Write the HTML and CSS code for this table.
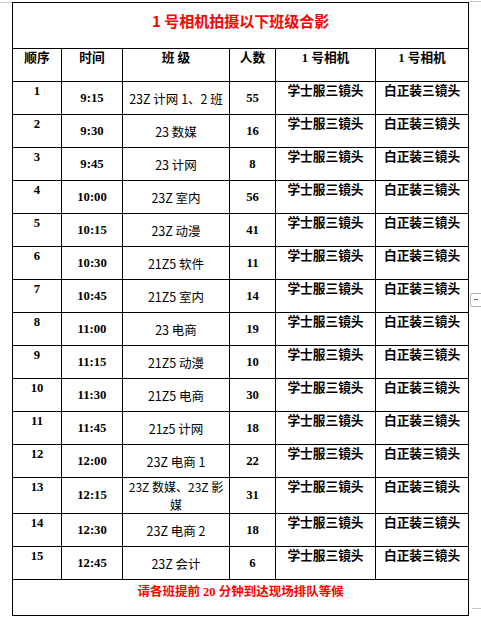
FILE: index.html
```html
<!DOCTYPE html>
<html lang="zh-CN">
<head>
<meta charset="utf-8">
<title>1 号相机拍摄以下班级合影</title>
<link rel="stylesheet" href="styles.css">
</head>
<body>
<div class="page">
  <span class="mark mark-tl"></span>
  <span class="mark mark-tr"></span>
  <span class="mark mark-br"></span>
  <span class="side-tab"><span class="side-dash"></span></span>
  <table class="sched">
    <colgroup>
      <col class="c-no"><col class="c-time"><col class="c-class"><col class="c-count"><col class="c-cam"><col class="c-cam2">
    </colgroup>
    <tr class="r-title"><td colspan="6" class="title">1 号相机拍摄以下班级合影</td></tr>
    <tr class="r-head">
      <th>顺序</th><th>时间</th><th>班 级</th><th>人数</th><th>1 号相机</th><th>1 号相机</th>
    </tr>
    <tr><td class="no">1</td><td class="time">9:15</td><td class="cls">23Z 计网 1、2 班</td><td class="cnt">55</td><td class="cam">学士服三镜头</td><td class="cam">白正装三镜头</td></tr>
    <tr><td class="no">2</td><td class="time">9:30</td><td class="cls">23 数媒</td><td class="cnt">16</td><td class="cam">学士服三镜头</td><td class="cam">白正装三镜头</td></tr>
    <tr><td class="no">3</td><td class="time">9:45</td><td class="cls">23 计网</td><td class="cnt">8</td><td class="cam">学士服三镜头</td><td class="cam">白正装三镜头</td></tr>
    <tr><td class="no">4</td><td class="time">10:00</td><td class="cls">23Z 室内</td><td class="cnt">56</td><td class="cam">学士服三镜头</td><td class="cam">白正装三镜头</td></tr>
    <tr><td class="no">5</td><td class="time">10:15</td><td class="cls">23Z 动漫</td><td class="cnt">41</td><td class="cam">学士服三镜头</td><td class="cam">白正装三镜头</td></tr>
    <tr><td class="no">6</td><td class="time">10:30</td><td class="cls">21Z5 软件</td><td class="cnt">11</td><td class="cam">学士服三镜头</td><td class="cam">白正装三镜头</td></tr>
    <tr><td class="no">7</td><td class="time">10:45</td><td class="cls">21Z5 室内</td><td class="cnt">14</td><td class="cam">学士服三镜头</td><td class="cam">白正装三镜头</td></tr>
    <tr><td class="no">8</td><td class="time">11:00</td><td class="cls">23 电商</td><td class="cnt">19</td><td class="cam">学士服三镜头</td><td class="cam">白正装三镜头</td></tr>
    <tr><td class="no">9</td><td class="time">11:15</td><td class="cls">21Z5 动漫</td><td class="cnt">10</td><td class="cam">学士服三镜头</td><td class="cam">白正装三镜头</td></tr>
    <tr><td class="no">10</td><td class="time">11:30</td><td class="cls">21Z5 电商</td><td class="cnt">30</td><td class="cam">学士服三镜头</td><td class="cam">白正装三镜头</td></tr>
    <tr><td class="no">11</td><td class="time">11:45</td><td class="cls">21z5 计网</td><td class="cnt">18</td><td class="cam">学士服三镜头</td><td class="cam">白正装三镜头</td></tr>
    <tr><td class="no">12</td><td class="time">12:00</td><td class="cls">23Z 电商 1</td><td class="cnt">22</td><td class="cam">学士服三镜头</td><td class="cam">白正装三镜头</td></tr>
    <tr class="r-tall"><td class="no">13</td><td class="time">12:15</td><td class="cls cls-wrap">23Z 数媒、23Z 影<br>媒</td><td class="cnt">31</td><td class="cam">学士服三镜头</td><td class="cam">白正装三镜头</td></tr>
    <tr><td class="no">14</td><td class="time">12:30</td><td class="cls">23Z 电商 2</td><td class="cnt">18</td><td class="cam">学士服三镜头</td><td class="cam">白正装三镜头</td></tr>
    <tr><td class="no">15</td><td class="time">12:45</td><td class="cls">23Z 会计</td><td class="cnt">6</td><td class="cam">学士服三镜头</td><td class="cam">白正装三镜头</td></tr>
    <tr class="r-foot"><td colspan="6" class="foot">请各班提前 <span class="num">20</span> 分钟到达现场排队等候</td></tr>
  </table>
</div>
</body>
</html>
```

FILE: styles.css
```css
html, body {
  margin: 0;
  padding: 0;
  background: #ffffff;
}

.page {
  position: relative;
  width: 481px;
  height: 621px;
  padding: 2px 0 0 12px;
  box-sizing: border-box;
  overflow: hidden;
}

.sched {
  border-collapse: collapse;
  table-layout: fixed;
  width: 456px;
  font-family: "Liberation Serif", "Noto Sans CJK SC", serif;
  color: #000;
}

.c-no { width: 49px; }
.c-time { width: 61px; }
.c-class { width: 107px; }
.c-count { width: 46px; }
.c-cam { width: 100px; }
.c-cam2 { width: 93px; }

.sched td, .sched th {
  border: 1px solid #000;
  padding: 0;
  text-align: center;
  font-size: 12.7px;
  line-height: 15px;
}

.sched tr { height: 33px; }
.sched tr.r-title { height: 46px; }
.sched tr.r-tall { height: 35px; }
.sched tr.r-foot { height: 36px; }

.title {
  vertical-align: top;
  padding-top: 9px !important;
  font-family: "Noto Sans CJK SC", sans-serif;
  font-weight: 700;
  font-size: 15px !important;
  line-height: 18px !important;
  color: #ff0000;
}

.r-head th {
  vertical-align: top;
  padding-top: 2px;
  font-weight: 700;
}

.no {
  vertical-align: top;
  padding-top: 2px !important;
  font-weight: 700;
}

.time {
  vertical-align: middle;
  font-weight: 700;
}

.cls {
  vertical-align: middle;
  font-family: "Noto Sans CJK SC", sans-serif;
  font-weight: 400;
  font-size: 12.5px !important;
}

.cls-wrap {
  font-size: 12px !important;
  line-height: 17.5px !important;
}

.cnt {
  vertical-align: middle;
  font-weight: 700;
}

.cam {
  vertical-align: top;
  padding-top: 2px !important;
  font-weight: 700;
}

.foot {
  vertical-align: top;
  padding-top: 5px !important;
  font-weight: 700;
  font-size: 12.5px !important;
  color: #ff0000;
}

.foot .num {
  font-family: "Liberation Serif", serif;
}

.mark {
  position: absolute;
  background: #c8c8c8;
}
.mark-tl { left: 0; top: 2px; width: 11px; height: 1px; }
.mark-tr { left: 469px; top: 1px; width: 12px; height: 1px; }
.mark-br { left: 472px; top: 608px; width: 9px; height: 1px; }

.side-tab {
  position: absolute;
  left: 470px;
  top: 293px;
  width: 14px;
  height: 12px;
  border: 1px solid #b4b4b4;
  border-radius: 2px;
  background: #fff;
}
.side-dash {
  position: absolute;
  left: 3px;
  top: 5px;
  width: 4px;
  height: 1px;
  background: #666;
}
```
